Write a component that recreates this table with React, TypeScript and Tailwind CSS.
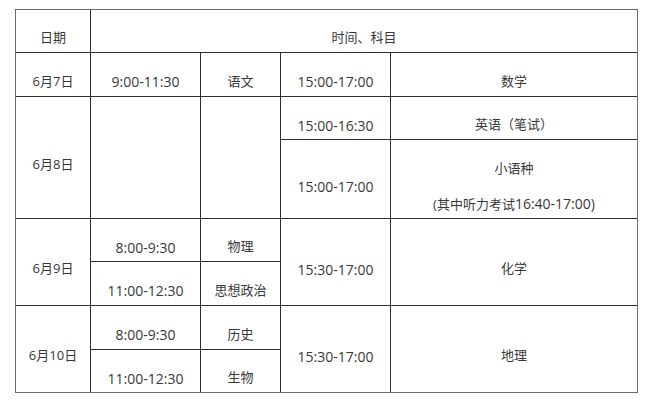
const cell =
  "flex flex-col items-center justify-center bg-white pt-[14px] text-center";
const time = `${cell} text-[14px]`;

export default function App() {
  return (
    <div
      className="h-[402px] w-[660px] bg-white pt-[9px] pl-[15px] text-[13px] text-[#383838]"
      style={{ fontFamily: '"Open Sans", "Noto Sans CJK SC", sans-serif' }}
    >
      <div className="grid w-max grid-cols-[74px_109px_79px_109px_246px] grid-rows-[42px_43px_42px_78px_42px_43px_43px_42px] gap-px border border-[#6b6b6b] bg-[#2e2e2e]">
        {/* header */}
        <div className={cell}>日期</div>
        <div className={`${cell} col-span-4`}>时间、科目</div>

        {/* 6月7日 */}
        <div className={cell}>6月7日</div>
        <div className={time}>9:00-11:30</div>
        <div className={cell}>语文</div>
        <div className={time}>15:00-17:00</div>
        <div className={cell}>数学</div>

        {/* 6月8日 */}
        <div className={`${cell} row-span-2`}>6月8日</div>
        <div className={`${cell} row-span-2`}></div>
        <div className={`${cell} row-span-2`}></div>
        <div className={time}>15:00-16:30</div>
        <div className={cell}>英语（笔试）</div>
        <div className={time}>15:00-17:00</div>
        <div className={`${cell} gap-[14px]`}>
          <p className="leading-[21px]">小语种</p>
          <p className="leading-[21px]">
            (其中听力考试<span className="text-[14px]">16:40-17:00)</span>
          </p>
        </div>

        {/* 6月9日 */}
        <div className={`${cell} row-span-2`}>6月9日</div>
        <div className={time}>8:00-9:30</div>
        <div className={cell}>物理</div>
        <div className={`${time} row-span-2`}>15:30-17:00</div>
        <div className={`${cell} row-span-2`}>化学</div>
        <div className={time}>11:00-12:30</div>
        <div className={cell}>思想政治</div>

        {/* 6月10日 */}
        <div className={`${cell} row-span-2`}>6月10日</div>
        <div className={time}>8:00-9:30</div>
        <div className={cell}>历史</div>
        <div className={`${time} row-span-2`}>15:30-17:00</div>
        <div className={`${cell} row-span-2`}>地理</div>
        <div className={time}>11:00-12:30</div>
        <div className={cell}>生物</div>
      </div>
    </div>
  );
}
